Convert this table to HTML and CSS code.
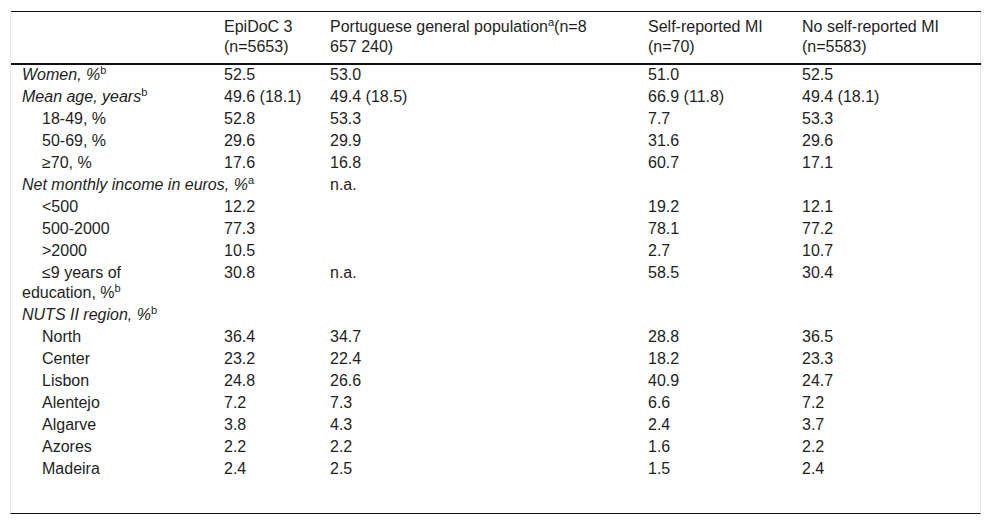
FILE: index.html
```html
<!DOCTYPE html>
<html lang="en">
<head>
<meta charset="utf-8">
<title>Table</title>
<link rel="stylesheet" href="styles.css">
</head>
<body>
<div class="wrap">
<table class="data">
<colgroup>
<col class="c1"><col class="c2"><col class="c3"><col class="c4"><col class="c5">
</colgroup>
<thead>
<tr>
<th></th>
<th>EpiDoC 3<br>(n=5653)</th>
<th class="pop">Portuguese general population<sup>a</sup>(n=8 657 240)</th>
<th>Self-reported MI<br>(n=70)</th>
<th>No self-reported MI<br>(n=5583)</th>
</tr>
</thead>
<tbody>
<tr><td class="lbl"><em>Women, %</em><sup>b</sup></td><td>52.5</td><td>53.0</td><td>51.0</td><td>52.5</td></tr>
<tr><td class="lbl"><em>Mean age, years</em><sup>b</sup></td><td>49.6 (18.1)</td><td>49.4 (18.5)</td><td>66.9 (11.8)</td><td>49.4 (18.1)</td></tr>
<tr><td class="lbl sub">18-49, %</td><td>52.8</td><td>53.3</td><td>7.7</td><td>53.3</td></tr>
<tr><td class="lbl sub">50-69, %</td><td>29.6</td><td>29.9</td><td>31.6</td><td>29.6</td></tr>
<tr><td class="lbl sub">≥70, %</td><td>17.6</td><td>16.8</td><td>60.7</td><td>17.1</td></tr>
<tr><td class="lbl" colspan="2"><em>Net monthly income in euros, %</em><sup>a</sup></td><td>n.a.</td><td></td><td></td></tr>
<tr><td class="lbl sub">&lt;500</td><td>12.2</td><td></td><td>19.2</td><td>12.1</td></tr>
<tr><td class="lbl sub">500-2000</td><td>77.3</td><td></td><td>78.1</td><td>77.2</td></tr>
<tr><td class="lbl sub">&gt;2000</td><td>10.5</td><td></td><td>2.7</td><td>10.7</td></tr>
<tr><td class="lbl sub">≤9 years of education, %<sup>b</sup></td><td>30.8</td><td>n.a.</td><td>58.5</td><td>30.4</td></tr>
<tr><td class="lbl" colspan="2"><em>NUTS II region, %</em><sup>b</sup></td><td></td><td></td><td></td></tr>
<tr><td class="lbl sub">North</td><td>36.4</td><td>34.7</td><td>28.8</td><td>36.5</td></tr>
<tr><td class="lbl sub">Center</td><td>23.2</td><td>22.4</td><td>18.2</td><td>23.3</td></tr>
<tr><td class="lbl sub">Lisbon</td><td>24.8</td><td>26.6</td><td>40.9</td><td>24.7</td></tr>
<tr><td class="lbl sub">Alentejo</td><td>7.2</td><td>7.3</td><td>6.6</td><td>7.2</td></tr>
<tr><td class="lbl sub">Algarve</td><td>3.8</td><td>4.3</td><td>2.4</td><td>3.7</td></tr>
<tr><td class="lbl sub">Azores</td><td>2.2</td><td>2.2</td><td>1.6</td><td>2.2</td></tr>
<tr><td class="lbl sub">Madeira</td><td>2.4</td><td>2.5</td><td>1.5</td><td>2.4</td></tr>
</tbody>
</table>
</div>
</body>
</html>
```

FILE: styles.css
```css
html, body {
  margin: 0;
  padding: 0;
  background: #fff;
}
body {
  padding: 11px 11px 0 10px;
  font-family: "Liberation Sans", Arial, sans-serif;
  font-size: 16px;
  color: #1e1e1e;
}
.wrap {
  border-left: 1px solid #e6e6e6;
  border-right: 1px solid #e6e6e6;
  border-bottom: 1px solid #111;
  padding-bottom: 32px;
}
.data {
  width: 100%;
  border-collapse: collapse;
  table-layout: fixed;
  border-top: 1px solid #111;
}
.c1 { width: 202px; }
.c2 { width: 106px; }
.c3 { width: 318px; }
.c4 { width: 154px; }
.c5 { width: 190px; }
.data th,
.data td {
  text-align: left;
  vertical-align: top;
  font-weight: normal;
  line-height: 20px;
  padding: 0 11px 2px;
}
.data thead th {
  padding-top: 5px;
  padding-bottom: 6px;
  border-bottom: 2px solid #111;
}
.data thead th.pop {
  padding-right: 36px;
}
.data td.lbl {
  padding-right: 36px;
}
.data td.sub {
  text-indent: 20px;
}
.data sup {
  font-size: 11px;
  line-height: 0;
  vertical-align: 6px;
  font-style: normal;
}
.data em {
  font-style: italic;
}
```
